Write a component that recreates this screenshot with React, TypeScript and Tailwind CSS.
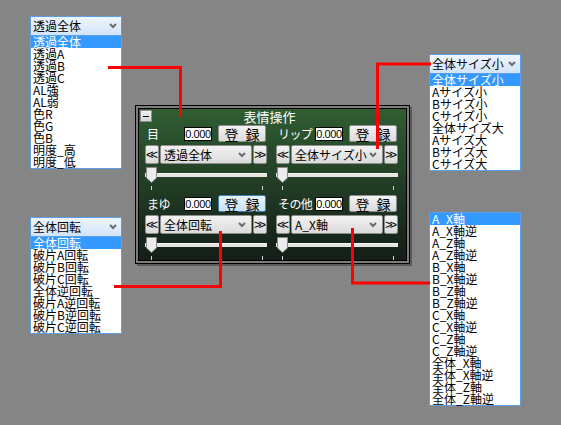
import React from "react";

type PopupProps = {
  header?: string;
  items: string[];
  className: string;
};

const Chevron = () => (
  <svg width="8" height="6" viewBox="0 0 8 6" className="shrink-0">
    <path d="M1 1l3 3 3-3" fill="none" stroke="#6b6b6b" strokeWidth="2" />
  </svg>
);

// ドロップダウンの展開リスト
function Popup({ header, items, className }: PopupProps) {
  return (
    <div className={`absolute w-[92px] ${className}`}>
      {header && (
        <div className="h-[20px] flex items-center justify-between pl-[2px] pr-[4px] border border-[#5b9fe6] bg-gradient-to-b from-[#eef5fd] to-[#d2e4f8] text-[12px] leading-[12px] text-black">
          <span>{header}</span>
          <Chevron />
        </div>
      )}
      <ul
        className={`bg-white border border-[#5b9fe6] ${header ? "border-t-0" : ""}`}
      >
        {items.map((item, i) => (
          <li
            key={item}
            className={`h-[12px] leading-[12px] pl-[2px] text-[12px] whitespace-nowrap ${
              i === 0 ? "bg-[#3399ff] text-white" : "text-black"
            }`}
          >
            {item}
          </li>
        ))}
      </ul>
    </div>
  );
}

const btnBase =
  "border rounded-[2px] bg-gradient-to-b from-[#f3f3f3] to-[#dbdbdb] border-[#8e8e8e] text-black";

function ArrowBtn({ children }: { children: string }) {
  return (
    <div
      className={`${btnBase} w-[14px] h-[19px] flex items-center justify-center font-['Liberation_Sans',sans-serif] text-[13px] leading-[13px] tracking-[-3px] pr-[3px]`}
    >
      {children}
    </div>
  );
}

type BlockProps = {
  label: string;
  value: string;
  active?: boolean;
};

function Block({ label, value, active }: BlockProps) {
  return (
    <div className="flex flex-col">
      {/* 数値と登録 */}
      <div className="flex items-center h-[17px]">
        <span className="w-[39px] pl-[2px] text-white text-[12px] leading-[12px] tracking-[-0.6px] whitespace-nowrap">
          {label}
        </span>
        <div className="w-[28px] h-[14px] bg-white border border-black flex items-center justify-center font-['Liberation_Sans',sans-serif] text-[11px] leading-[12px] tracking-[-0.4px] text-black">
          0.000
        </div>
        <button
          className={`ml-[6px] w-[48px] h-[17px] flex items-center justify-center pl-[2px] border rounded-[2px] text-[14px] leading-[14px] tracking-[2px] text-black bg-gradient-to-b ${
            active
              ? "from-[#e6f2fc] to-[#c9e2f7] border-[#3c7fb1]"
              : "from-[#f3f3f3] to-[#dbdbdb] border-[#8e8e8e]"
          }`}
        >
          登 録
        </button>
      </div>

      {/* 選択 */}
      <div className="mt-[3px] flex gap-[1px] h-[19px]">
        <ArrowBtn>{"<<"}</ArrowBtn>
        <div
          className={`${btnBase} w-[92px] h-[19px] flex items-center justify-between pl-[3px] pr-[5px] text-[12px] leading-[12px] whitespace-nowrap`}
        >
          <span>{value}</span>
          <Chevron />
        </div>
        <ArrowBtn>{">>"}</ArrowBtn>
      </div>

      {/* スライダー */}
      <div className="relative h-[26px]">
        <div className="mt-[9px] h-[4px] bg-[#e4e4e4] border-t border-[#f6f6f6]" />
        <div className="mt-[9px] flex justify-between pl-[6px] pr-[4px]">
          <span className="w-[1px] h-[4px] bg-[#d2d2d2]" />
          <span className="w-[1px] h-[4px] bg-[#d2d2d2]" />
        </div>
        <svg
          width="11"
          height="16"
          viewBox="0 0 11 16"
          className="absolute left-[1px] top-[3px]"
        >
          <path
            d="M0.5 0.5H10.5V11L5.5 15.5L0.5 11Z"
            fill="#ececec"
            stroke="#8a8a8a"
          />
        </svg>
      </div>
    </div>
  );
}

function Panel() {
  return (
    <div className="absolute left-[135px] top-[105px] w-[275px] border border-black bg-[#7c7c7c] p-[2px] shadow-[2px_2px_0_#5a5a5a]">
      <div className="border border-black bg-gradient-to-b from-[#305e32] to-[#131e17]">
        <div className="h-[16px] grid grid-cols-[14px_1fr_14px] items-start">
          <div className="ml-[1px] mt-[1px] w-[12px] h-[12px] flex items-center justify-center bg-gradient-to-b from-[#f3f3f3] to-[#d6d6d6] border border-[#8e8e8e]">
            <span className="w-[6px] h-[1px] bg-black" />
          </div>
          <div className="pr-[6px] text-center text-white text-[13px] leading-[15px]">
            表情操作
          </div>
        </div>
        <div className="grid grid-cols-[122px_122px] gap-x-[9px] gap-y-[5px] pl-[6px]">
          <Block label="目" value="透過全体" />
          <Block label="リップ" value="全体サイズ小" />
          <Block label="まゆ" value="全体回転" active />
          <Block label="その他" value="A_X軸" />
        </div>
      </div>
    </div>
  );
}

export default function App() {
  return (
    <div className="relative w-[561px] h-[425px] overflow-hidden bg-[#858585] font-['Noto_Sans_CJK_JP',sans-serif]">
      <Popup
        className="left-[30px] top-[16px]"
        header="透過全体"
        items={[
          "透過全体",
          "透過A",
          "透過B",
          "透過C",
          "AL強",
          "AL弱",
          "色R",
          "色G",
          "色B",
          "明度_高",
          "明度_低",
        ]}
      />
      <Popup
        className="left-[429px] top-[54px]"
        header="全体サイズ小"
        items={[
          "全体サイズ小",
          "Aサイズ小",
          "Bサイズ小",
          "Cサイズ小",
          "全体サイズ大",
          "Aサイズ大",
          "Bサイズ大",
          "Cサイズ大",
        ]}
      />
      <Popup
        className="left-[30px] top-[217px]"
        header="全体回転"
        items={[
          "全体回転",
          "破片A回転",
          "破片B回転",
          "破片C回転",
          "全体逆回転",
          "破片A逆回転",
          "破片B逆回転",
          "破片C逆回転",
        ]}
      />
      <Popup
        className="left-[429px] top-[212px]"
        items={[
          "A_X軸",
          "A_X軸逆",
          "A_Z軸",
          "A_Z軸逆",
          "B_X軸",
          "B_X軸逆",
          "B_Z軸",
          "B_Z軸逆",
          "C_X軸",
          "C_X軸逆",
          "C_Z軸",
          "C_Z軸逆",
          "全体_X軸",
          "全体_X軸逆",
          "全体_Z軸",
          "全体_Z軸逆",
        ]}
      />

      <Panel />

      {/* 引き出し線 */}
      <svg
        width="561"
        height="425"
        className="absolute inset-0 pointer-events-none"
      >
        <g fill="none" stroke="#ff0000" strokeWidth="3">
          <polyline points="108,67.5 180.5,67.5 180.5,117" />
          <polyline points="431,64 377.5,64 377.5,149" />
          <polyline points="114,286.5 220.5,286.5 220.5,231" />
          <polyline points="352.5,228 352.5,283 430,283" />
        </g>
      </svg>
    </div>
  );
}
